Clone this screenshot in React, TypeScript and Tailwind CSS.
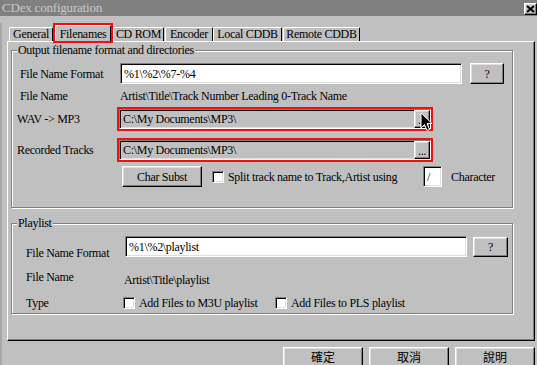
import React from "react"

const sunken =
  "border border-t-[#808080] border-l-[#808080] border-b-white border-r-white shadow-[inset_1px_1px_0_#000,inset_-1px_-1px_0_#dfdfdf]"
const raised =
  "border border-t-white border-l-white border-b-black border-r-black shadow-[inset_-1px_-1px_0_#808080,inset_1px_1px_0_#dfdfdf] bg-[#c0c0c0]"

function Button({ label, className = "" }: { label: string; className?: string }) {
  return <div className={`${raised} flex items-center justify-center ${className}`}>{label}</div>
}

function Check({ label, className = "" }: { label: string; className?: string }) {
  return (
    <div className={`flex items-center ${className}`}>
      <span className={`w-[12px] h-[12px] bg-white shrink-0 ${sunken}`} />
      <span className="ml-[4px] whitespace-nowrap">{label}</span>
    </div>
  )
}

function Group({
  title,
  className = "",
  children,
}: {
  title: string
  className?: string
  children: React.ReactNode
}) {
  return (
    <div className={`relative border border-[#808080] shadow-[inset_1px_1px_0_#fff,1px_1px_0_#fff] ${className}`}>
      <span className="absolute left-[5px] -top-[8px] bg-[#c0c0c0] px-[1px] leading-[15px] whitespace-nowrap">
        {title}
      </span>
      {children}
    </div>
  )
}

function PathField() {
  return (
    <div className="h-[24px] w-[316px] border-2 border-[#f01010] flex">
      <div className={`flex-1 flex items-center bg-[#c0c0c0] ${sunken}`}>
        <span className="pl-[3px] flex-1 whitespace-nowrap">C:\My Documents\MP3\</span>
        <div className={`${raised} w-[16px] h-full flex items-end justify-center pb-[3px] leading-[8px]`}>...</div>
      </div>
    </div>
  )
}

const tabs = [
  { name: "General", cls: "ml-[7px] w-[44px]" },
  { name: "Filenames", cls: "ml-[2px] w-[56px]", active: true },
  { name: "CD ROM", cls: "ml-[2px] w-[51px]" },
  { name: "Encoder", cls: "ml-[1px] w-[48px]" },
  { name: "Local CDDB", cls: "w-[69px]" },
  { name: "Remote CDDB", cls: "ml-[1px] w-[77px]" },
]

function Cursor() {
  return (
    <svg className="absolute left-[420px] top-[112px]" width="13" height="20" viewBox="0 0 13 20">
      <path d="M1 1 L1 16 L4.5 12.5 L7 18.5 L9.5 17.5 L7 11.5 L12 11.5 Z" fill="#000" stroke="#fff" strokeWidth="1" />
    </svg>
  )
}

export default function App() {
  return (
    <div className="relative w-[537px] h-[365px] overflow-hidden bg-[#c0c0c0] text-black text-[12px] tracking-[-0.3px] font-['Liberation_Serif','Noto_Sans_CJK_TC',serif]">
      {/* title bar */}
      <div className="h-[16px] bg-[#808080] flex items-start justify-between">
        <span className="pl-[2px] text-[13px] leading-[16px] text-[#c8c8c8] tracking-[-0.2px]">CDex configuration</span>
        <div className={`${raised} mt-[3px] w-[13px] h-[12px] flex items-center justify-center`}>
          <svg width="9" height="8" viewBox="0 0 9 8">
            <path d="M1 1 L8 7 M8 1 L1 7" stroke="#000" strokeWidth="2" />
          </svg>
        </div>
      </div>

      <div className="border-l-2 border-l-[#a8a8a8] h-[349px]">
        {/* tabs */}
        <div className="mt-[7px] h-[18px] flex items-end relative z-10">
          {tabs.map((t) =>
            t.active ? (
              <div
                key={t.name}
                className={`relative h-[17px] -mb-[1px] bg-[#c0c0c0] border-t border-l border-white border-r border-r-black rounded-t-[2px] flex items-center justify-center ${t.cls}`}
              >
                {t.name}
                <span className="absolute -left-[3px] -right-[3px] -top-[3px] -bottom-[1px] border-2 border-[#f01010]" />
              </div>
            ) : (
              <div
                key={t.name}
                className={`h-[14px] border-t border-l border-white border-r border-r-black rounded-t-[2px] flex items-center justify-center leading-[13px] ${t.cls}`}
              >
                {t.name}
              </div>
            ),
          )}
        </div>

        {/* tab panel */}
        <div className="ml-[5px] w-[528px] h-[300px] border border-t-white border-l-white border-r-black border-b-black shadow-[inset_-1px_-1px_0_#808080] pt-[8px] pl-[3px]">
          <Group title="Output filename format and directories" className="w-[502px] h-[158px]">
            <div className="pt-[12px]">
              <div className="flex items-center h-[21px]">
                <span className="ml-[8px] w-[100px]">File Name Format</span>
                <div className={`w-[342px] h-[21px] bg-white flex items-center pl-[3px] ${sunken}`}>%1\%2\%7-%4</div>
                <Button label="?" className="ml-[8px] w-[34px] h-[21px]" />
              </div>
              <div className="flex items-center h-[18px] mt-[3px]">
                <span className="ml-[8px] w-[100px]">File Name</span>
                <span className="whitespace-nowrap">Artist\Title\Track Number Leading 0-Track Name</span>
              </div>
              <div className="flex items-center mt-[2px]">
                <span className="ml-[5px] w-[100px]">WAV -&gt; MP3</span>
                <PathField />
              </div>
              <div className="flex items-center mt-[7px]">
                <span className="ml-[5px] w-[100px]">Recorded Tracks</span>
                <PathField />
              </div>
              <div className="flex items-center h-[21px] mt-[4px]">
                <Button label="Char Subst" className="ml-[110px] w-[80px] h-[21px]" />
                <Check label="Split track name to Track,Artist using" className="ml-[10px] w-[211px]" />
                <div className={`w-[19px] h-[21px] bg-white pl-[3px] flex items-center ${sunken}`}>/</div>
                <span className="ml-[9px]">Character</span>
              </div>
            </div>
          </Group>

          <Group title="Playlist" className="mt-[15px] w-[502px] h-[91px]">
            <div className="pt-[12px]">
              <div className="flex items-start h-[21px]">
                <span className="ml-[14px] w-[99px] mt-[10px] leading-[15px]">File Name Format</span>
                <div className={`w-[342px] h-[21px] bg-white flex items-center pl-[3px] ${sunken}`}>%1\%2\playlist</div>
                <Button label="?" className="ml-[6px] mt-[1px] w-[35px] h-[20px]" />
              </div>
              <div className="flex items-start h-[15px] mt-[13px] leading-[15px]">
                <span className="ml-[14px] w-[98px]">File Name</span>
                <span className="mt-[3px]">Artist\Title\playlist</span>
              </div>
              <div className="flex items-center h-[15px] mt-[10px]">
                <span className="ml-[14px] w-[97px]">Type</span>
                <Check label="Add Files to M3U playlist" className="w-[152px]" />
                <Check label="Add Files to PLS playlist" />
              </div>
            </div>
          </Group>
        </div>

        {/* dialog buttons */}
        <div className="mt-[6px] flex justify-end gap-[6px] pr-[2px] font-['Noto_Sans_CJK_TC',sans-serif] tracking-normal">
          <Button label="確定" className="w-[80px] h-[22px] pb-[2px]" />
          <Button label="取消" className="w-[80px] h-[22px] pb-[2px]" />
          <Button label="說明" className="w-[80px] h-[22px] pb-[2px]" />
        </div>
      </div>

      <Cursor />
    </div>
  )
}
